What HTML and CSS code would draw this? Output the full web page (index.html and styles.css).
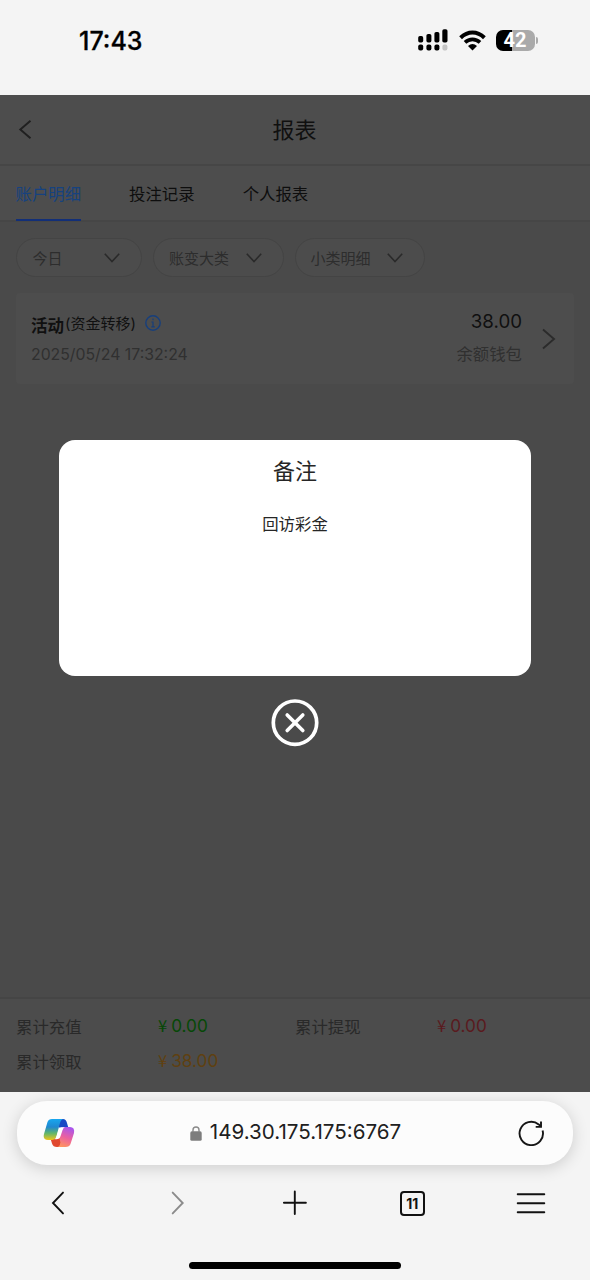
FILE: index.html
```html
<!DOCTYPE html>
<html lang="zh-CN">
<head>
<meta charset="utf-8">
<meta name="viewport" content="width=device-width">
<title>报表</title>
<link rel="stylesheet" href="styles.css">
</head>
<body>
<div class="phone">
  <header class="status">
    <span class="clock">17:43</span>
    <div class="status-icons">
      <svg class="signal" width="31" height="22" viewBox="0 0 31 22">
        <rect x="1.2" y="7" width="5" height="6.4" rx="1.7"/><rect x="9.4" y="5" width="5" height="8.4" rx="1.7"/><rect x="17.4" y="3" width="5" height="10.400" rx="1.7"/><rect x="25.300" y="0.3" width="5.200" height="13.100" rx="1.7"/>
        <rect x="1.2" y="15.6" width="5" height="5.8" rx="1.9"/><rect x="9.4" y="15.6" width="5" height="5.8" rx="1.9"/><rect x="17.4" y="15.6" width="5" height="5.8" rx="1.9"/><rect x="25.400" y="15.6" width="5" height="5.8" rx="1.9" fill="#c4c4c4"/>
      </svg>
      <svg class="wifi" width="27" height="21" viewBox="0 0 27 21">
        <g fill="none" stroke="#000" stroke-width="4"><path d="M1.6 7.700Q7 2.500 13.5 2.500T25.4 7.700"/><path d="M6 12.300Q9.2 9.300 13.5 9.300T21 12.300" stroke-width="3.7"/></g>
        <path d="M9 16Q13.5 12.200 18 16L13.5 20.400Z"/>
      </svg>
      <div class="battery"><span class="battery-body">42</span><span class="battery-tip"></span></div>
    </div>
  </header>

  <main class="page">
    <div class="titlebar">
      <svg class="back" width="14" height="20" viewBox="0 0 14 20"><path d="M12.500 .7L2.300 9.500l10.200 8.800" fill="none" stroke="#202020" stroke-width="1.9"/></svg>
      <h1>报表</h1>
    </div>
    <nav class="tabs">
      <a class="tab active">账户明细</a><a class="tab">投注记录</a><a class="tab">个人报表</a>
    </nav>
    <div class="content">
      <div class="filters">
        <div class="filter"><span>今日</span><svg width="16" height="10" viewBox="0 0 16 10"><path d="M.8.8L8 8.6 15.2.8"/></svg></div>
        <div class="filter wide"><span>账变大类</span><svg width="16" height="10" viewBox="0 0 16 10"><path d="M.8.8L8 8.6 15.2.8"/></svg></div>
        <div class="filter wide"><span>小类明细</span><svg width="16" height="10" viewBox="0 0 16 10"><path d="M.8.8L8 8.6 15.2.8"/></svg></div>
      </div>
      <section class="record">
        <div class="record-main">
          <div class="record-title"><b>活动</b><span>(资金转移)</span>
            <svg width="16" height="16" viewBox="0 0 16 16" fill="none" stroke="#173f7c" stroke-width="1.4"><circle cx="8" cy="8" r="7.2"/><path d="M8 3.6v1.6M6.4 7H8v4.8M6.3 11.8h3.5" stroke-width="1.2"/></svg>
          </div>
          <time>2025/05/24 17:32:24</time>
        </div>
        <div class="record-amount"><strong>38.00</strong><span>余额钱包</span></div>
        <svg class="more" width="14" height="22" viewBox="0 0 14 22"><path d="M1 1.5l11 9.5L1 20.500" fill="none" stroke="#2b2b2b" stroke-width="1.9"/></svg>
      </section>
    </div>
    <footer class="totals">
      <span>累计充值</span><span class="money green"><i>¥</i>0.00</span><span>累计提现</span><span class="money red"><i>¥</i>0.00</span>
      <span>累计领取</span><span class="money orange"><i>¥</i>38.00</span>
    </footer>
    <div class="overlay">
      <div class="dialog"><h2>备注</h2><p>回访彩金</p></div>
      <svg class="close" width="48" height="48" viewBox="0 0 48 48" fill="none" stroke="#fff" stroke-linecap="round"><circle cx="24" cy="23.700" r="21.7" stroke-width="3.7"/><path d="M16.200 15.900l15.600 15.600M31.800 15.900L16.200 31.500" stroke-width="3.600"/></svg>
    </div>
  </main>

  <div class="browser">
    <div class="address">
      <svg class="copilot" width="32" height="30" viewBox="0 0 32 30">
        <defs>
          <linearGradient id="a" x1="0" y1="0" x2="0" y2="1"><stop offset="0" stop-color="#18a7ef"/><stop offset=".38" stop-color="#2088d0"/><stop offset=".68" stop-color="#61b66b"/><stop offset="1" stop-color="#f0c51b"/></linearGradient>
          <linearGradient id="b" x1=".6" y1="0" x2=".3" y2="1"><stop offset="0" stop-color="#a955ed"/><stop offset=".5" stop-color="#eb60a0"/><stop offset="1" stop-color="#ff955e"/></linearGradient>
        </defs>
        <path d="M15 1h5q3 0 4 4l1.300 4.500H16Z" fill="#1748c5"/>
        <path d="M7.500 20.500l1.500 5q1 3.500 5 3.500h3l2-9Z" fill="#e0482f"/>
        <path d="M9 1h12q-3 0-4 4l-3.500 13q-1 4-5 4H5q-5.500 0-4-6L4.500 4q1-3 4.500-3Z" fill="url(#a)"/>
        <path d="M19 9h8q5 0 4 6l-3.500 11q-1 3-5 3H14q2.500 0 3.500-4L16 18Z" fill="url(#b)"/>
        <path d="M19 9.200h3q-1.500 0-2.500 3l-2 6q-1 3-4 3H11.500q1.500-.5 2.300-3.500l1.700-5.500q1-3 3.500-3Z" fill="#fff"/>
      </svg>
      <div class="url"><svg width="12" height="15" viewBox="0 0 12 15"><rect x=".3" y="5.300" width="11.400" height="9.500" rx="1.600" fill="#7d7d7d"/><path d="M3 6V4a3 3 0 0 1 6 0v2" fill="none" stroke="#8a8a8a" stroke-width="1.400"/></svg><span>149.30.175.175:6767</span></div>
      <svg class="reload" width="26" height="26" viewBox="0 0 26 26" fill="none" stroke="#161616" stroke-width="1.900"><path d="M24.600 10.500A11.700 11.700 0 1 1 20.700 4.400L23 6.500"/><path d="M23 1.500v5.400h-5.300"/></svg>
    </div>
    <nav class="tools">
      <svg width="30" height="30" viewBox="0 0 30 30"><path d="M19 4.600L9 15l10 10.400"/></svg>
      <svg class="disabled" width="30" height="30" viewBox="0 0 30 30"><path d="M9.700 4.600l10 10.400-10 10.400"/></svg>
      <svg width="30" height="30" viewBox="0 0 30 30"><path d="M11.800 3.500v22.500M.9 14.700h22"/></svg>
      <span class="tab-count">11</span>
      <svg width="30" height="30" viewBox="0 0 30 30"><path d="M1.700 6.200h26.600M1.700 15.200h26.600M1.700 24.200h26.600"/></svg>
    </nav>
    <div class="home"></div>
  </div>
</div>
</body>
</html>
```
FILE: styles.css
```css
* { box-sizing: border-box; }
body { margin: 0; background: #f4f4f4; font-family: Inter, "Noto Sans CJK SC", sans-serif; }
svg { display: block; flex: none; }
h1, h2, p { margin: 0; font-weight: 400; }
.phone { width: 590px; height: 1280px; display: flex; flex-direction: column; overflow: hidden; }

.status { height: 95px; padding: 0 52px 15px 79px; display: flex; align-items: center; justify-content: space-between; }
.clock { padding-top: 1px; font-size: 25px; font-weight: 500; color: #000; -webkit-text-stroke: .3px #000; }
.status-icons { display: flex; align-items: center; }
.wifi { margin-left: 11px; }
.battery { display: flex; align-items: center; margin-left: 10px; }
.battery-body { width: 39px; height: 21px; border-radius: 7px; background: linear-gradient(90deg, #000 42%, #aaa 42%); color: #fff; font-family: Roboto, sans-serif; font-size: 20px; font-weight: 700; line-height: 21px; text-align: center; }
.battery-tip { width: 2px; height: 7px; margin-left: 1.500px; border-radius: 0 3px 3px 0; background: #aaa; }

.page { position: relative; height: 997px; display: flex; flex-direction: column; background: #4a4a4a; }
.titlebar { height: 71px; display: grid; grid-template-columns: 1fr auto 1fr; align-items: center; padding: 0 19px 0 18px; background: #4d4d4d; border-bottom: 2px solid #464646; }
.titlebar h1 { grid-column: 2; font-size: 22px; line-height: 32px; color: #101010; }
.tabs { height: 56px; display: flex; gap: 48px; padding: 0 15.500px; background: #4d4d4d; border-bottom: 2px solid #464646; }
.tab { height: 55px; padding-top: 1px; font-size: 16.400px; line-height: 54px; color: #0e0e0e; border-bottom: 2px solid transparent; }
.tab.active { color: #16427f; border-color: #122f78; }
.content { flex: 1; padding: 16px 16px 0; }
.filters { display: flex; gap: 11px; }
.filter { width: 126px; height: 39px; padding: 0 21px 0 15.500px; display: flex; align-items: center; justify-content: space-between; border: 1px solid #444; border-radius: 20px; background: #4c4c4c; font-size: 15px; color: #2d2d2d; }
.filter.wide { width: 130.500px; padding-left: 15px; }
.filter span { padding-bottom: 1px; }
.filter svg { fill: none; stroke: #2a2a2a; stroke-width: 1.600; }
.record { height: 91px; margin-top: 16px; padding: 0 18px 0 15px; display: flex; align-items: center; border-radius: 4px; background: #4d4d4d; }
.record-main { flex: 1; display: flex; flex-direction: column; gap: 7px; }
.record-title { display: flex; align-items: center; height: 24px; color: #101010; }
.record-title b { font-size: 16.500px; padding-top: 4px; }
.record-title span { font-size: 15px; margin-left: 1px; }
.record-title svg { margin-left: 9px; margin-top: 1px; }
.record time { padding-top: 1px; font-size: 15.800px; line-height: 24px; color: #303030; }
.record-amount { display: flex; flex-direction: column; align-items: flex-end; gap: 8px; margin: 0 20px 2px 0; }
.record-amount strong { font-size: 18.700px; font-weight: 400; line-height: 24px; color: #101010; }
.record-amount span { font-size: 16.400px; line-height: 24px; color: #303030; }
.totals { height: 95px; padding: 9px 16px 0; display: grid; grid-template-columns: 142px 137px 142px 1fr; grid-auto-rows: 35px; align-items: center; border-top: 2px solid #454545; background: #4c4c4c; font-size: 16.400px; color: #292929; }
.money { display: flex; align-items: center; gap: 4px; font-size: 17.200px; }
.money i { font-style: normal; font-size: 16.500px; line-height: 22px; padding-bottom: 2px; font-family: "Noto Sans CJK SC", sans-serif; }
.green { color: #064806; }
.red { color: #5a1a1e; }
.orange { color: #5f4010; }

.overlay { position: absolute; inset: 0; padding-top: 345px; display: flex; flex-direction: column; align-items: center; gap: 23px; }
.dialog { width: 472px; height: 236px; padding-top: 15px; border-radius: 16px; background: #fff; text-align: center; color: #262626; }
.dialog h2 { font-size: 22px; line-height: 32px; }
.dialog p { margin-top: 25px; font-size: 16.400px; line-height: 24px; }

.browser { height: 188px; padding: 9px 17px 0; display: flex; flex-direction: column; background: #f4f4f4; overflow: hidden; }
.address { height: 64px; padding: 0 29px 0 26px; display: flex; align-items: center; justify-content: space-between; border-radius: 30px; background: #fcfcfc; box-shadow: 0 3px 16px rgba(0, 0, 0, .16); }
.url { display: flex; align-items: center; gap: 8px; padding-right: 2px; font-size: 20.600px; line-height: 24px; color: #202020; }
.url span { padding-bottom: 2px; }
.tools { height: 76px; padding: 0 27px; display: flex; align-items: center; justify-content: space-between; }
.tools svg { fill: none; stroke: #111; stroke-width: 1.900; stroke-linecap: round; }
.tools .disabled { stroke: #8b8b8b; }
.tab-count { width: 25px; height: 25px; margin: 0 2px 0 -2px; border: 2px solid #111; border-radius: 4px; font-size: 14px; font-weight: 700; line-height: 21px; text-align: center; color: #111; }
.home { width: 212px; height: 7px; margin: 21px auto 0; border-radius: 4px; background: #000; }
```
